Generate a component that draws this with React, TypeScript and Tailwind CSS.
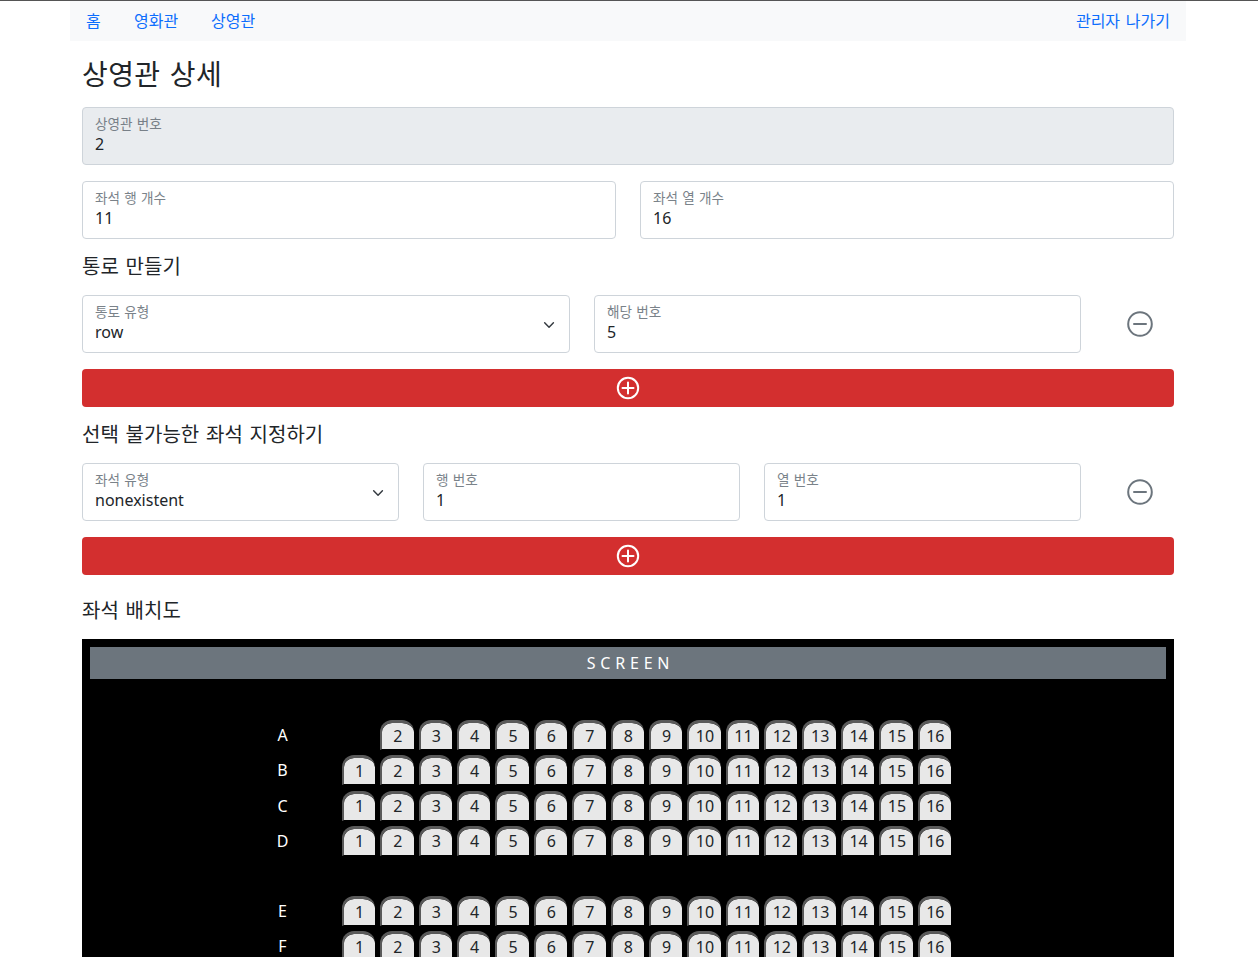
const seats = Array.from({ length: 16 }, (_, i) => i + 1);

function PlusCircle() {
  return (
    <svg width="24" height="24" viewBox="0 0 24 24" fill="none" stroke="#fff" strokeWidth="2">
      <circle cx="12" cy="12" r="10.2" />
      <path d="M12 6.5v11M6.5 12h11" strokeLinecap="round" />
    </svg>
  );
}

function DashCircle() {
  return (
    <svg width="26" height="26" viewBox="0 0 26 26" fill="none" stroke="#6c757d" strokeWidth="2">
      <circle cx="13" cy="13" r="11.8" />
      <path d="M7 13h12" strokeLinecap="round" />
    </svg>
  );
}

function Field({ label, value, select, disabled, className }: { label: string; value: string; select?: boolean; disabled?: boolean; className?: string }) {
  return (
    <div className={`relative h-[58px] rounded-[4px] border border-[#ced4da] pl-3 pt-[6px] ${disabled ? 'bg-[#e9ecef]' : 'bg-white'} ${className ?? ''}`}>
      <div className="text-[13.6px] leading-5 text-[#6c757d] opacity-90 [word-spacing:0.05em]">{label}</div>
      <div className="text-base leading-6 -mt-[2px] text-[#212529]">{value}</div>
      {select && (
        <svg className="absolute right-[12px] top-[21px]" width="16" height="16" viewBox="0 0 16 16" fill="none">
          <path d="M2 5l6 6 6-6" stroke="#343a40" strokeWidth="2" strokeLinecap="round" strokeLinejoin="round" transform="translate(2.2 2.2) scale(0.73)" />
        </svg>
      )}
    </div>
  );
}

function AddButton() {
  return (
    <button className="flex h-[38px] w-full items-center justify-center rounded-[4px] bg-[#d32f2f]">
      <PlusCircle />
    </button>
  );
}

function Seat({ n, hidden }: { n: number; hidden?: boolean }) {
  if (hidden) return <div className="h-[30px] w-[33.4px] shrink-0 mr-[5px]" />;
  return (
    <div className="flex h-[30px] w-[33.4px] shrink-0 mr-[5px] items-center justify-center rounded-t-[12px] border-t-[3px] border-l-2 border-b border-[#5a5a5a] border-b-transparent bg-[#e8e8e8] bg-clip-padding text-base text-[#212529] leading-none pb-[1px]">
      {n}
    </div>
  );
}

function SeatRow({ label, skip, className }: { label: string; skip?: number; className?: string }) {
  return (
    <div className={`flex h-[35.2px] items-start ${className ?? ''}`}>
      <div className="w-[61px] mr-[28.8px] shrink-0 text-center text-base leading-[30px] text-white">{label}</div>
      {seats.map((n) => (
        <Seat key={n} n={n} hidden={n === skip} />
      ))}
    </div>
  );
}

export default function App() {
  return (
    <div className="h-[957px] overflow-hidden border-t border-[#555] bg-white text-[#212529] [word-spacing:0.1em] font-['Noto_Sans','Noto_Sans_CJK_KR',sans-serif]">
      <nav className="ml-[70px] flex h-10 w-[1116px] items-center justify-between bg-[#f8f9fa] pl-4 pr-4 text-base text-[#0d6efd]">
        <div className="flex">
          <a className="w-[48px]">홈</a>
          <a className="w-[77px]">영화관</a>
          <a>상영관</a>
        </div>
        <a>관리자 나가기</a>
      </nav>

      <main className="ml-[82px] w-[1092px]">
        <h3 className="mt-4 mb-4 text-[28px] leading-[34px] tracking-[0.4px]">상영관 상세</h3>

        <Field label="상영관 번호" value="2" disabled />

        <div className="mt-4 grid grid-cols-2 gap-6">
          <Field label="좌석 행 개수" value="11" />
          <Field label="좌석 열 개수" value="16" />
        </div>

        <h5 className="mt-4 mb-4 text-xl leading-6">통로 만들기</h5>

        <div className="flex gap-6">
          <Field label="통로 유형" value="row" select className="w-[488px]" />
          <Field label="해당 번호" value="5" className="w-[487px]" />
          <div className="flex flex-1 items-center justify-center"><DashCircle /></div>
        </div>
        <div className="mt-4"><AddButton /></div>

        <h5 className="mt-4 mb-4 text-xl leading-6">선택 불가능한 좌석 지정하기</h5>

        <div className="flex gap-6">
          <Field label="좌석 유형" value="nonexistent" select className="w-[317px]" />
          <Field label="행 번호" value="1" className="w-[317px]" />
          <Field label="열 번호" value="1" className="w-[317px]" />
          <div className="flex flex-1 items-center justify-center"><DashCircle /></div>
        </div>
        <div className="mt-4"><AddButton /></div>

        <h5 className="mt-6 mb-4 text-xl leading-6">좌석 배치도</h5>

        <section className="h-[400px] bg-black px-2 pt-2">
          <div className="flex h-8 items-center justify-center bg-[#6c757d] pl-[5px] text-base tracking-[4.8px] text-white">SCREEN</div>
          <div className="mt-[41.2px] pl-[162px]">
            <SeatRow label="A" skip={1} />
            <SeatRow label="B" />
            <SeatRow label="C" />
            <SeatRow label="D" className="mb-[35.2px]" />
            <SeatRow label="E" />
            <SeatRow label="F" />
          </div>
        </section>
      </main>
    </div>
  );
}
